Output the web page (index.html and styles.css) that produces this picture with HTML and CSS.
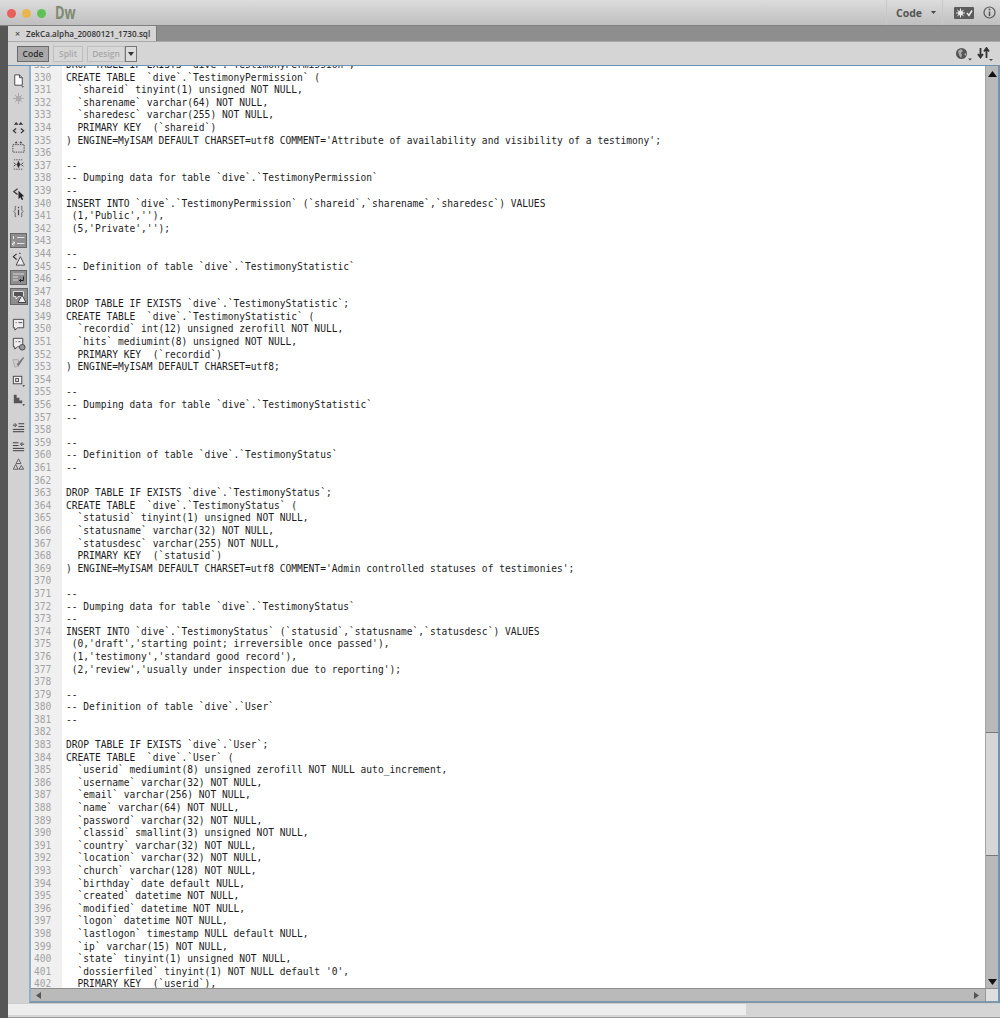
FILE: index.html
```html
<!DOCTYPE html>
<html lang="en">
<head>
<meta charset="utf-8">
<title>Dw</title>
<link rel="stylesheet" href="styles.css">
</head>
<body>
<div class="app">
  <header class="titlebar">
    <div class="lights"><span class="light red"></span><span class="light amber"></span><span class="light green"></span></div>
    <span class="logo">Dw</span>
    <div class="title-right">
      <div class="workspace">Code<svg class="caret" width="5" height="3" viewBox="0 0 5 3"><path d="M0 0h5L2.500 3z"/></svg></div>
      <svg class="sync" width="20" height="12" viewBox="0 0 20 12"><rect width="20" height="12" rx="1" fill="#5c5c5c"/><circle cx="6.500" cy="6" r="2.500" fill="#e8e8e8"/><path d="M6.500 1.500v9M2 6h9M3.300 2.800l6.400 6.400M9.700 2.800L3.300 9.200" stroke="#e8e8e8"/><path d="M13 6l2 2.500L18 3.500" fill="none" stroke="#eee" stroke-width="1.500"/></svg>
      <svg class="info" width="13" height="13" viewBox="0 0 13 13"><circle cx="6.500" cy="6.500" r="5.500" fill="none" stroke="#555" stroke-width="1.200"/><path d="M6.500 5.500v4.500" stroke="#555" stroke-width="1.500"/><circle cx="6.500" cy="3.600" r="1" fill="#555"/></svg>
    </div>
  </header>
  <div class="body">
    <div class="strip"></div>
    <div class="main">
      <div class="tabbar">
        <div class="tab"><span class="close">×</span><span class="tabname">ZekCa.alpha_20080121_1730.sql</span></div>
      </div>
      <div class="toolbar">
        <button class="btn active">Code</button>
        <button class="btn split">Split</button>
        <button class="btn design">Design</button>
        <button class="btn drop"><svg width="6" height="4" viewBox="0 0 6 4"><path d="M0 0h6L3 4z" fill="#333"/></svg></button>
        <div class="tool-right">
          <svg width="17" height="14" viewBox="0 0 17 14"><circle cx="6.500" cy="6.500" r="5.500" fill="#555"/><path d="M3 4l3-2 2 2-2 2 1 2-1 3-2-3zM9 7l2-1v3z" fill="#aaa"/><path d="M13 11.500h4l-2 2z" fill="#444"/></svg>
          <svg width="17" height="14" viewBox="0 0 17 14"><path d="M3.500 1v8M1 7l2.500 3.500L6 7M9.500 11V3M7 4.500L9.500 1 12 4.500" fill="none" stroke="#333" stroke-width="1.800"/><path d="M12 12h4l-2 2z" fill="#444"/></svg>
        </div>
      </div>
      <div class="workarea">
        <nav class="rail">
          <div class="group">
            <span class="ic"><svg viewBox="0 0 16 16"><path d="M4 2h5l3 3v8H4z" fill="#fff" stroke="#444"/><path d="M9 2v3h3" fill="none" stroke="#444"/><path d="M11 14h3l-1.500 1.500z" fill="#444"/></svg></span>
            <span class="ic"><svg viewBox="0 0 16 16"><circle cx="8" cy="8" r="3" fill="#aaa"/><path d="M8 2v12M2 8h12M4 4l8 8M12 4l-8 8" stroke="#aaa"/></svg></span>
          </div>
          <div class="group">
            <span class="ic"><svg viewBox="0 0 16 16"><path d="M5.500 9L2.500 11.500 5.500 14M10.500 9l3 2.500-3 2.500" fill="none" stroke="#333" stroke-width="1.300"/><path d="M3 5l2.500-3L8 5zM8 5l2.500-3L13 5z" fill="#333"/></svg></span>
            <span class="ic"><svg viewBox="0 0 16 16"><rect x="2" y="6" width="12" height="8" fill="none" stroke="#444" stroke-dasharray="1.500 1"/><path d="M4 4.500l1.500-2 1.500 2zM9 4.500l1.500-2 1.500 2z" fill="#333"/></svg></span>
            <span class="ic"><svg viewBox="0 0 16 16"><path d="M3 3h10M3 13h10" stroke="#555" stroke-dasharray="1.500 1"/><path d="M8 4l2 4-2 4-2-4z" fill="#333"/><path d="M3 6l2 2-2 2M13 6l-2 2 2 2" fill="none" stroke="#333"/></svg></span>
          </div>
          <div class="group">
            <span class="ic"><svg viewBox="0 0 16 16"><path d="M7 3L3 6l4 3" fill="none" stroke="#333" stroke-width="1.300"/><path d="M8 5l6 6-2.500.3 1.500 3-1.500.7-1.500-3L8 14z" fill="#222"/></svg></span>
            <span class="ic"><svg viewBox="0 0 16 16"><path d="M5.500 2.500H4.500v4L3 8l1.500 1.500v4h1M10.500 2.500h1v4L13 8l-1.500 1.500v4h-1" fill="none" stroke="#666"/><path d="M8 3v1.500M8 6v6" stroke="#444" stroke-width="1.300"/></svg></span>
          </div>
          <div class="group">
            <span class="ic boxed"><svg viewBox="0 0 15 13"><path d="M2.500 2v3M1.500 8h2v1.500h-2V11h2" fill="none" stroke="#eee" stroke-width=".9"/><path d="M6 3.500h7.500M6 9.500h7.500" stroke="#e2e2e2" stroke-width="1.200"/></svg></span>
            <span class="ic"><svg viewBox="0 0 16 16"><path d="M6 2L2.500 5 6 8M9 1l1 1" fill="none" stroke="#333" stroke-width="1.200"/><path d="M10 5l4.500 9h-9z" fill="#eee" stroke="#444"/></svg></span>
            <span class="ic boxed"><svg viewBox="0 0 15 13"><path d="M2 3h11M2 6h5M2 9h5" stroke="#d8d8d8"/><path d="M12.500 5.500V9.500H8.500M10 8L8.500 9.500 10 11" fill="none" stroke="#222"/></svg></span>
            <span class="ic boxed big"><svg viewBox="0 0 16 15"><path d="M2.500 2.500h10v5H7L5 10V7.500H2.500z" fill="#555" stroke="#ddd"/><path d="M11 6l4 7.500H7z" fill="#eee" stroke="#444"/></svg></span>
          </div>
          <div class="group">
            <span class="ic"><svg viewBox="0 0 16 16"><path d="M2.500 2.500h11v9H7L4 14v-2.500H2.500z" fill="#eee" stroke="#444"/><path d="M5 6h1M8 6h4" stroke="#444"/></svg></span>
            <span class="ic"><svg viewBox="0 0 16 16"><path d="M2.500 2.500h10v9H7L4 14v-2.500H2.500z" fill="#eee" stroke="#444"/><path d="M5 6h1M8 6h2" stroke="#444"/><circle cx="12" cy="12" r="3" fill="#999" stroke="#444"/></svg></span>
            <span class="ic"><svg viewBox="0 0 16 16"><path d="M2 5l6 0v7l-4 1z" fill="#ccc" stroke="#aaa"/><path d="M6 10l7-8 1 1-6 9z" fill="#777"/></svg></span>
            <span class="ic"><svg viewBox="0 0 16 16"><rect x="2.500" y="3.500" width="9" height="8" fill="#eee" stroke="#444"/><rect x="5" y="6" width="3" height="3" fill="none" stroke="#444"/><path d="M12 13h3l-1.500 2z" fill="#444"/></svg></span>
            <span class="ic"><svg viewBox="0 0 16 16"><path d="M3 3h3v3h3v3h3v3H3z" fill="#555"/><path d="M12 13h3l-1.500 2z" fill="#444"/></svg></span>
          </div>
          <div class="group">
            <span class="ic"><svg viewBox="0 0 16 16"><path d="M8 4h6M8 7h6M2 10h12M2 12.500h12" stroke="#333"/><path d="M2 5.500h3M4 3.500l2 2-2 2" fill="none" stroke="#333"/></svg></span>
            <span class="ic"><svg viewBox="0 0 16 16"><path d="M2 4h6M2 7h6M2 10h12M2 12.500h12" stroke="#333"/><path d="M14 5.500h-3M12 3.500l-2 2 2 2" fill="none" stroke="#333"/></svg></span>
            <span class="ic"><svg viewBox="0 0 16 16"><path d="M8 2l2.500 5h-5zM5 8l2.500 5h-5zM11 9l2.500 4h-5z" fill="#ddd" stroke="#555"/></svg></span>
          </div>
        </nav>
        <div class="editor">
          <div class="editor-top">
            <div class="viewport">
<pre class="gutter">329
330
331
332
333
334
335
336
337
338
339
340
341
342
343
344
345
346
347
348
349
350
351
352
353
354
355
356
357
358
359
360
361
362
363
364
365
366
367
368
369
370
371
372
373
374
375
376
377
378
379
380
381
382
383
384
385
386
387
388
389
390
391
392
393
394
395
396
397
398
399
400
401
402</pre>
<pre class="code">DROP TABLE IF EXISTS `dive`.`TestimonyPermission`;
CREATE TABLE  `dive`.`TestimonyPermission` (
  `shareid` tinyint(1) unsigned NOT NULL,
  `sharename` varchar(64) NOT NULL,
  `sharedesc` varchar(255) NOT NULL,
  PRIMARY KEY  (`shareid`)
) ENGINE=MyISAM DEFAULT CHARSET=utf8 COMMENT='Attribute of availability and visibility of a testimony';

--
-- Dumping data for table `dive`.`TestimonyPermission`
--
INSERT INTO `dive`.`TestimonyPermission` (`shareid`,`sharename`,`sharedesc`) VALUES
 (1,'Public',''),
 (5,'Private','');

--
-- Definition of table `dive`.`TestimonyStatistic`
--

DROP TABLE IF EXISTS `dive`.`TestimonyStatistic`;
CREATE TABLE  `dive`.`TestimonyStatistic` (
  `recordid` int(12) unsigned zerofill NOT NULL,
  `hits` mediumint(8) unsigned NOT NULL,
  PRIMARY KEY  (`recordid`)
) ENGINE=MyISAM DEFAULT CHARSET=utf8;

--
-- Dumping data for table `dive`.`TestimonyStatistic`
--

--
-- Definition of table `dive`.`TestimonyStatus`
--

DROP TABLE IF EXISTS `dive`.`TestimonyStatus`;
CREATE TABLE  `dive`.`TestimonyStatus` (
  `statusid` tinyint(1) unsigned NOT NULL,
  `statusname` varchar(32) NOT NULL,
  `statusdesc` varchar(255) NOT NULL,
  PRIMARY KEY  (`statusid`)
) ENGINE=MyISAM DEFAULT CHARSET=utf8 COMMENT='Admin controlled statuses of testimonies';

--
-- Dumping data for table `dive`.`TestimonyStatus`
--
INSERT INTO `dive`.`TestimonyStatus` (`statusid`,`statusname`,`statusdesc`) VALUES
 (0,'draft','starting point; irreversible once passed'),
 (1,'testimony','standard good record'),
 (2,'review','usually under inspection due to reporting');

--
-- Definition of table `dive`.`User`
--

DROP TABLE IF EXISTS `dive`.`User`;
CREATE TABLE  `dive`.`User` (
  `userid` mediumint(8) unsigned zerofill NOT NULL auto_increment,
  `username` varchar(32) NOT NULL,
  `email` varchar(256) NOT NULL,
  `name` varchar(64) NOT NULL,
  `password` varchar(32) NOT NULL,
  `classid` smallint(3) unsigned NOT NULL,
  `country` varchar(32) NOT NULL,
  `location` varchar(32) NOT NULL,
  `church` varchar(128) NOT NULL,
  `birthday` date default NULL,
  `created` datetime NOT NULL,
  `modified` datetime NOT NULL,
  `logon` datetime NOT NULL,
  `lastlogon` timestamp NULL default NULL,
  `ip` varchar(15) NOT NULL,
  `state` tinyint(1) unsigned NOT NULL,
  `dossierfiled` tinyint(1) NOT NULL default '0',
  PRIMARY KEY  (`userid`),</pre>
            </div>
            <div class="vscroll">
              <svg class="arrow" width="9" height="6" viewBox="0 0 9 6"><path d="M0 6h9L4.500 0z" fill="#111"/></svg>
              <div class="vthumb"></div>
              <svg class="arrow" width="9" height="6" viewBox="0 0 9 6"><path d="M0 0h9L4.500 6z" fill="#111"/></svg>
            </div>
          </div>
          <div class="hscroll">
            <div class="htrack">
              <svg width="5" height="7" viewBox="0 0 5 7"><path d="M5 0v7L0 3.500z" fill="#555"/></svg>
              <svg width="5" height="7" viewBox="0 0 5 7"><path d="M0 0v7l5-3.500z" fill="#555"/></svg>
            </div>
            <div class="corner"></div>
          </div>
        </div>
      </div>
      <footer class="status"><div class="status-left"></div></footer>
    </div>
  </div>
</div>
</body>
</html>
```

FILE: styles.css
```css
* { box-sizing: border-box; }
html, body { margin: 0; padding: 0; }
body { width: 1000px; height: 1018px; overflow: hidden; background: #d5d5d5; font-family: "Open Sans", "Liberation Sans", sans-serif; }
.app { display: flex; flex-direction: column; height: 1018px; }

.titlebar { height: 26px; flex: none; display: flex; align-items: center; padding-left: 7px; background: linear-gradient(#dcdcdc, #bfbfbf); border-bottom: 1px solid #808080; }
.lights { display: flex; gap: 6px; margin-top: 1px; }
.light { width: 9px; height: 9px; border-radius: 50%; }
.red { background: #e9605a; }
.amber { background: #e8b64a; }
.green { background: #5fc256; }
.logo { margin-left: 9px; font: 700 17px/1 "Open Sans", sans-serif; color: #7f8a70; transform: scaleX(.76); transform-origin: left center; }
.title-right { margin-left: auto; display: flex; align-items: center; height: 100%; }
.workspace { display: flex; align-items: center; height: 100%; width: 57px; padding-left: 9px; font-size: 10.500px; font-weight: 700; color: #555; border-left: 1px solid #c8c8c8; border-right: 1px solid #c8c8c8; }
.caret { margin-left: 9px; fill: #444; }
.sync { margin-left: 11px; }
.info { margin-left: 9px; margin-right: 4px; }

.body { flex: 1; display: flex; min-height: 0; }
.strip { width: 8px; flex: none; background: #565656; }
.main { flex: 1; display: flex; flex-direction: column; min-width: 0; }

.tabbar { height: 15px; flex: none; background: #8e8e8e; }
.tab { width: 149px; height: 15px; display: flex; align-items: center; background: #d4d4d4; border-right: 1px solid #777; }
.close { width: 18px; padding-left: 7px; font-size: 9px; color: #333; }
.tabname { font-size: 8.150px; font-weight: 600; color: #333; white-space: nowrap; }

.toolbar { height: 24px; flex: none; display: flex; align-items: center; padding: 0 6px 0 9px; background: #d5d5d5; border-top: 1px solid #aaa; }
.btn { height: 16px; margin: 0 4px 0 0; padding: 0; font: 600 8.500px "Open Sans", sans-serif; background: #d7d7d7; border: 1px solid #bdbdbd; color: #a8a8a8; }
.btn.active { width: 32px; background: #a9a9a9; border-color: #6a6a6a; color: #2b2b2b; }
.btn.split { width: 30px; }
.btn.design { width: 38px; margin-right: 0; }
.btn.drop { width: 12px; display: flex; align-items: center; justify-content: center; border-color: #777; background: #dcdcdc; }
.tool-right { margin-left: auto; display: flex; gap: 5px; }

.workarea { flex: 1; display: flex; min-height: 0; border-top: 1px solid #6d93b5; }
.rail { width: 21px; flex: none; padding-top: 5px; background: #d2d2d2; display: flex; flex-direction: column; gap: 10px; }
.group { display: flex; flex-direction: column; }
.ic { height: 18.600px; display: flex; align-items: center; justify-content: center; }
.ic svg { width: 15px; height: 15px; }
.ic.boxed svg { background: #8e8e8e; outline: 1px solid #666; width: 15px; height: 13px; }
.ic.big svg { width: 16px; height: 15px; }

.editor { flex: 1; display: flex; flex-direction: column; min-width: 0; border-left: 2px solid #8fb0cc; border-right: 2px solid #6d93b5; border-bottom: 2px solid #7d97ad; }
.editor-top { flex: 1; display: flex; min-height: 0; }
.viewport { flex: 1; display: flex; overflow: hidden; background: #fff; min-width: 0; }
.gutter, .code { margin: -7px 0 0; font-family: "DejaVu Sans Mono", monospace; font-size: 9.600px; line-height: 12.600px; }
.gutter { width: 31px; flex: none; padding: 0 0 0 3px; height: calc(100% + 7px); background: #f0f0f0; color: #a2a2a2; }
.code { flex: 1; padding-left: 4px; color: #1c1c1c; }

.vscroll { width: 13px; flex: none; display: flex; flex-direction: column; align-items: center; justify-content: space-between; padding: 5px 0 3px; position: relative; background: #b9b9b9; border-left: 1px solid #a4a4a4; }
.vthumb { position: absolute; left: 0; right: 0; top: 666px; height: 124px; background: #d6d6d6; border-top: 1px solid #777; border-bottom: 1px solid #777; }

.hscroll { height: 13px; flex: none; display: flex; border-top: 1px solid #8c8c8c; }
.htrack { flex: 1; display: flex; align-items: center; justify-content: space-between; padding: 0 6px 0 5px; background: #bababa; }
.corner { width: 13px; background: #dedede; border-left: 1px solid #999; }

.status { height: 15px; flex: none; padding-bottom: 2px; background: #d5d5d5; border-top: 1px solid #ccc; border-bottom: 1px solid #999; }
.status-left { width: 738px; height: 100%; background: #ededed; }
```
